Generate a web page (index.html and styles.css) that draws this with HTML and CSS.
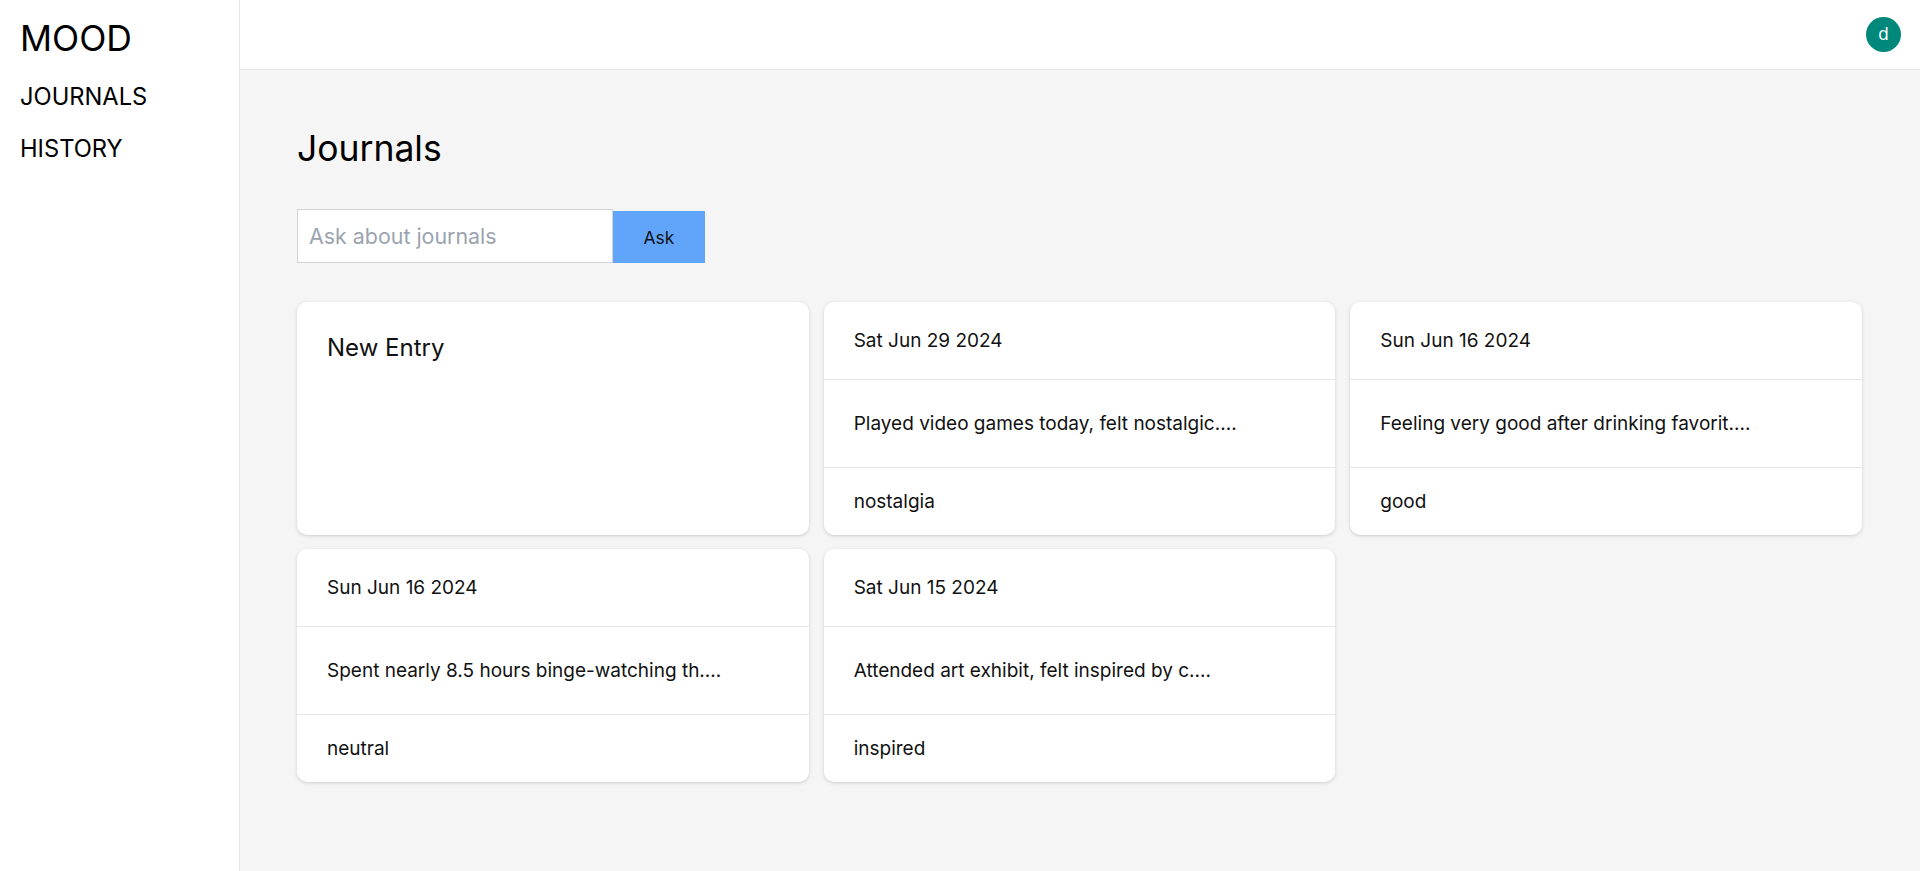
FILE: index.html
```html
<!DOCTYPE html>
<html lang="en">
<head>
<meta charset="utf-8">
<title>Mood - Journals</title>
<link rel="stylesheet" href="styles.css">
</head>
<body>
<div class="app">
  <aside class="sidebar">
    <div class="logo">MOOD</div>
    <ul class="nav">
      <li><a href="#">JOURNALS</a></li>
      <li><a href="#">HISTORY</a></li>
    </ul>
  </aside>
  <div class="main">
    <header class="header">
      <div class="avatar">d</div>
    </header>
    <section class="content">
      <h1 class="title">Journals</h1>
      <form class="search">
        <input class="search-input" type="text" placeholder="Ask about journals">
        <button class="search-btn" type="button">Ask</button>
      </form>
      <div class="grid">
        <div class="card new-card">
          <div class="new-entry">New Entry</div>
        </div>
        <div class="card">
          <div class="card-date">Sat Jun 29 2024</div>
          <div class="card-body">Played video games today, felt nostalgic....</div>
          <div class="card-foot">nostalgia</div>
        </div>
        <div class="card">
          <div class="card-date">Sun Jun 16 2024</div>
          <div class="card-body">Feeling very good after drinking favorit....</div>
          <div class="card-foot">good</div>
        </div>
        <div class="card">
          <div class="card-date">Sun Jun 16 2024</div>
          <div class="card-body">Spent nearly 8.5 hours binge-watching th....</div>
          <div class="card-foot">neutral</div>
        </div>
        <div class="card">
          <div class="card-date">Sat Jun 15 2024</div>
          <div class="card-body">Attended art exhibit, felt inspired by c....</div>
          <div class="card-foot">inspired</div>
        </div>
      </div>
    </section>
  </div>
</div>
</body>
</html>
```
FILE: styles.css
```css
* { box-sizing: border-box; }
html, body { margin: 0; padding: 0; height: 100%; }
body {
  font-family: Inter, "Noto Sans", "Liberation Sans", sans-serif;
  color: #111;
  background: #fff;
}
.app {
  display: grid;
  grid-template-columns: 240px 1fr;
  height: 100vh;
}
.sidebar {
  border-right: 1px solid #e6e6e6;
  padding: 0 20px;
  background: #fff;
}
.logo {
  height: 70px;
  padding-top: 16px;
  font-size: 35.5px;
  line-height: 45px;
  color: #000;
}
.nav {
  list-style: none;
  margin: 0;
  padding: 0;
}
.nav li {
  padding: 8.5px 0;
  font-size: 23.7px;
  line-height: 35px;
}
.nav a {
  color: #000;
  text-decoration: none;
}
.main {
  display: flex;
  flex-direction: column;
  min-width: 0;
}
.header {
  height: 70px;
  border-bottom: 1px solid #e6e6e6;
  display: flex;
  justify-content: flex-end;
  align-items: center;
  padding-right: 19px;
  background: #fff;
}
.avatar {
  width: 35px;
  height: 35px;
  border-radius: 50%;
  background: #00897b;
  color: #fff;
  display: flex;
  align-items: center;
  justify-content: center;
  font-size: 17px;
  line-height: 1;
}
.content {
  flex: 1;
  background: #f5f5f5;
  padding: 56px 58px 0 57px;
}
.title {
  margin: 0;
  font-size: 35.5px;
  line-height: 45px;
  font-weight: 400;
  color: #000;
}
.search {
  display: flex;
  align-items: flex-end;
  margin: 38px 0 0 0;
}
.search-input {
  width: 316px;
  height: 54px;
  border: 1px solid #d4d4d4;
  background: #fff;
  padding: 0 11px;
  font-family: inherit;
  font-size: 21.4px;
  color: #111;
  outline: none;
  border-radius: 0;
}
.search-input::placeholder { color: #9ca3af; }
.search-btn {
  width: 92px;
  height: 52px;
  border: none;
  background: #60a5fa;
  color: #111;
  font-family: inherit;
  font-size: 17.5px;
  padding: 0;
  border-radius: 0;
}
.grid {
  display: grid;
  grid-template-columns: repeat(3, 1fr);
  column-gap: 15px;
  row-gap: 14px;
  margin-top: 39px;
}
.card {
  background: #fff;
  border-radius: 10px;
  box-shadow: 0 1px 4px rgba(0,0,0,0.12), 0 1px 2px rgba(0,0,0,0.06);
  overflow: hidden;
  font-size: 19px;
  color: #111;
}
.card-date {
  padding: 24px 30px;
  line-height: 29px;
}
.card-body {
  border-top: 1px solid #e5e7eb;
  padding: 28.5px 30px;
  line-height: 30px;
}
.card-foot {
  border-top: 1px solid #e5e7eb;
  padding: 18.5px 30px;
  line-height: 30px;
}
.new-entry {
  padding: 27.5px 30px;
  font-size: 24px;
  line-height: 35px;
}
```
